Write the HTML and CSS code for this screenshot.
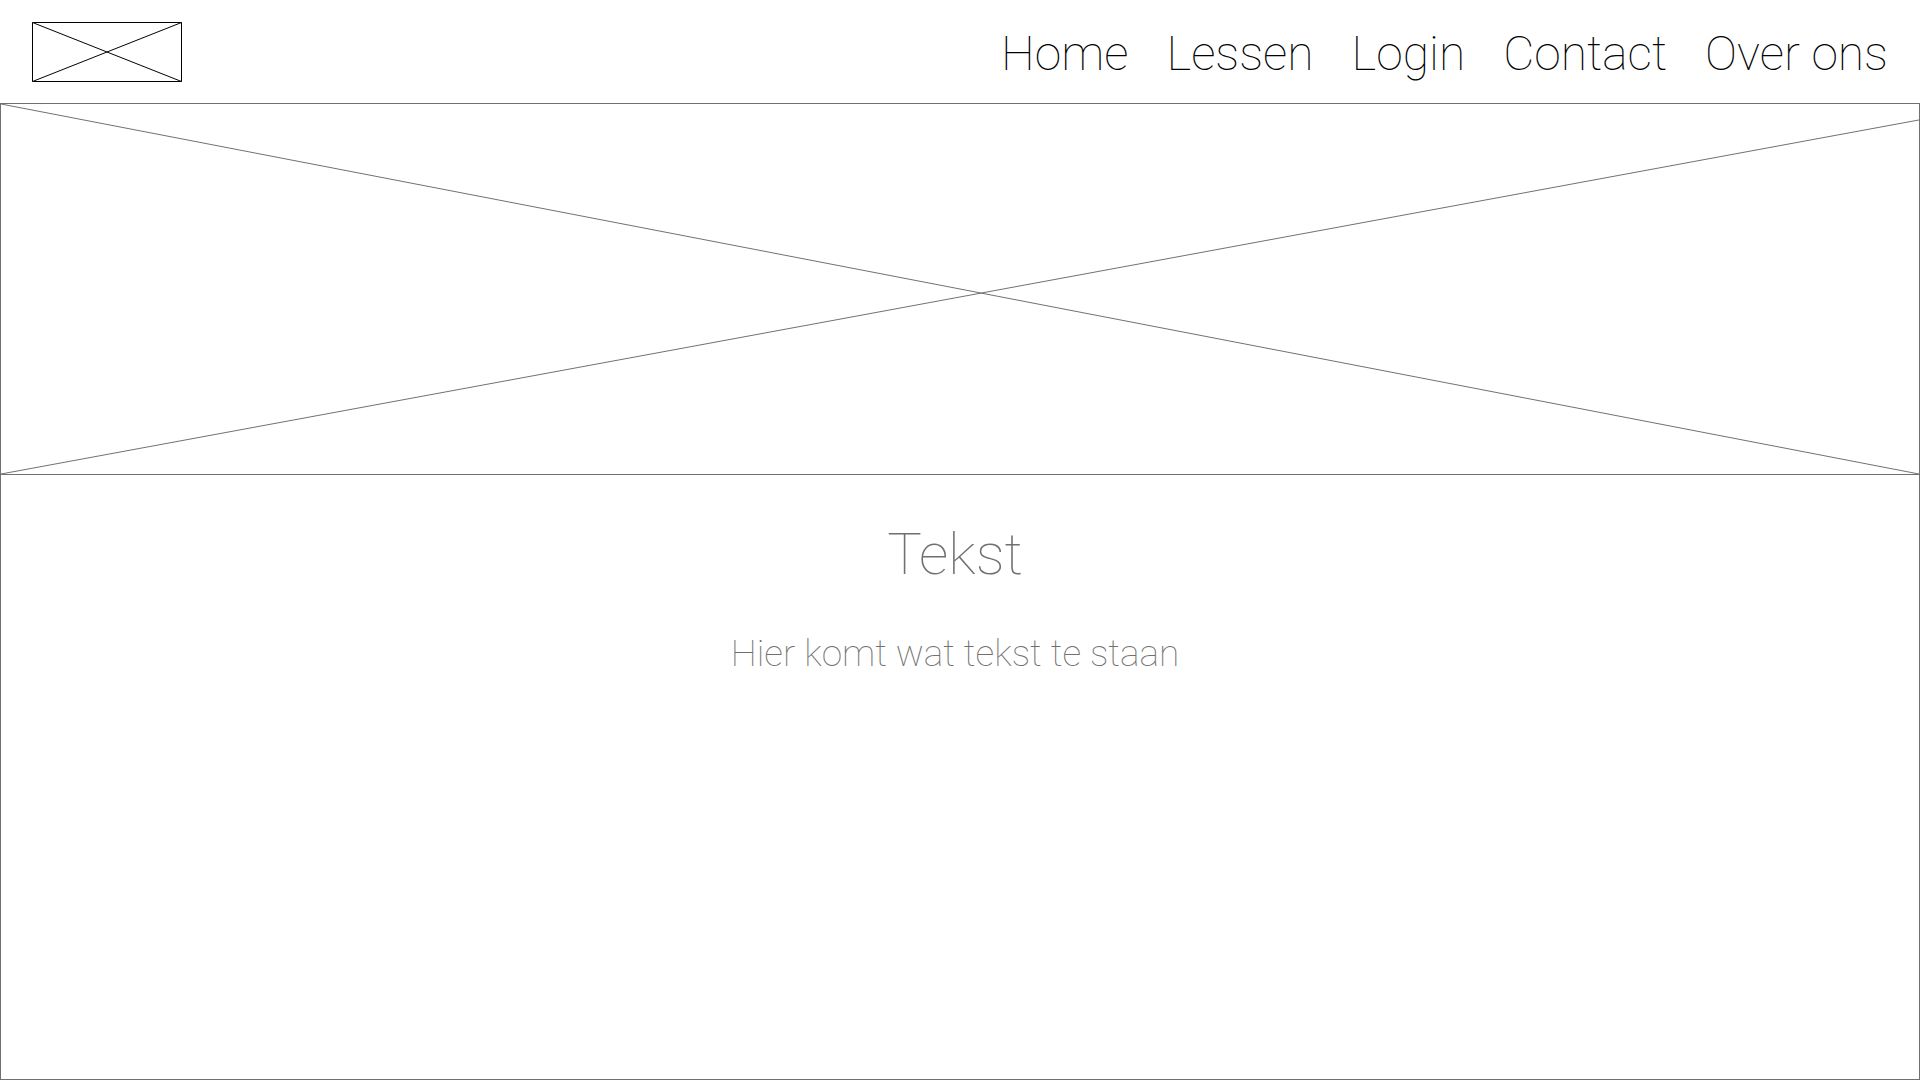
FILE: index.html
```html
<!DOCTYPE html>
<html lang="nl">
<head>
<meta charset="utf-8">
<title>Home</title>
<link rel="stylesheet" href="styles.css">
</head>
<body>
<header class="site-header">
  <a class="logo" href="#" aria-label="Home">
    <svg class="logo-mark" viewBox="0 0 150 60" aria-hidden="true">
      <path d="M.5 .5H149.5V59.5H.5Z"/>
      <path d="M.5 .5L149.5 59.5M.5 59.5L149.5 .5"/>
    </svg>
  </a>
  <nav class="site-nav">
    <a href="#">Home</a>
    <a href="#">Lessen</a>
    <a href="#">Login</a>
    <a href="#">Contact</a>
    <a href="#">Over ons</a>
  </nav>
</header>
<main class="page">
  <svg class="hero" viewBox="0 0 1920 371" preserveAspectRatio="none" aria-hidden="true">
    <path d="M0 0L1920 371M0 371L1920 16"/>
  </svg>
  <section class="intro">
    <h1>Tekst</h1>
    <p>Hier komt wat tekst te staan</p>
  </section>
</main>
</body>
</html>
```

FILE: styles.css
```css
* { box-sizing: border-box; }

body {
  margin: 0;
  min-height: 100vh;
  display: flex;
  flex-direction: column;
  background: #fff;
  color: #000;
  font-family: Roboto, Inter, sans-serif;
  font-weight: 100;
}

.site-header {
  display: flex;
  align-items: flex-end;
  justify-content: space-between;
  padding: 22px 32px 21px;
}

.logo-mark {
  display: block;
  width: 150px;
  height: 60px;
  fill: none;
  stroke: #000;
}

.site-nav {
  display: flex;
  gap: 38px;
  font-size: 48px;
  line-height: 56px;
}

.site-nav a {
  color: inherit;
  text-decoration: none;
}

.page {
  flex: 1;
  display: flex;
  flex-direction: column;
  border: 1px solid #707070;
  color: #707070;
}

.hero {
  width: 100%;
  height: 371px;
  fill: none;
  stroke: #707070;
  border-bottom: 1px solid #707070;
}

.intro {
  padding: 43px 10px 40px 0;
  text-align: center;
}

.intro h1 {
  margin: 0 0 40px;
  font-size: 58px;
  line-height: 72px;
  font-weight: 100;
}

.intro p {
  margin: 0;
  font-size: 37px;
  line-height: 48px;
}
```
